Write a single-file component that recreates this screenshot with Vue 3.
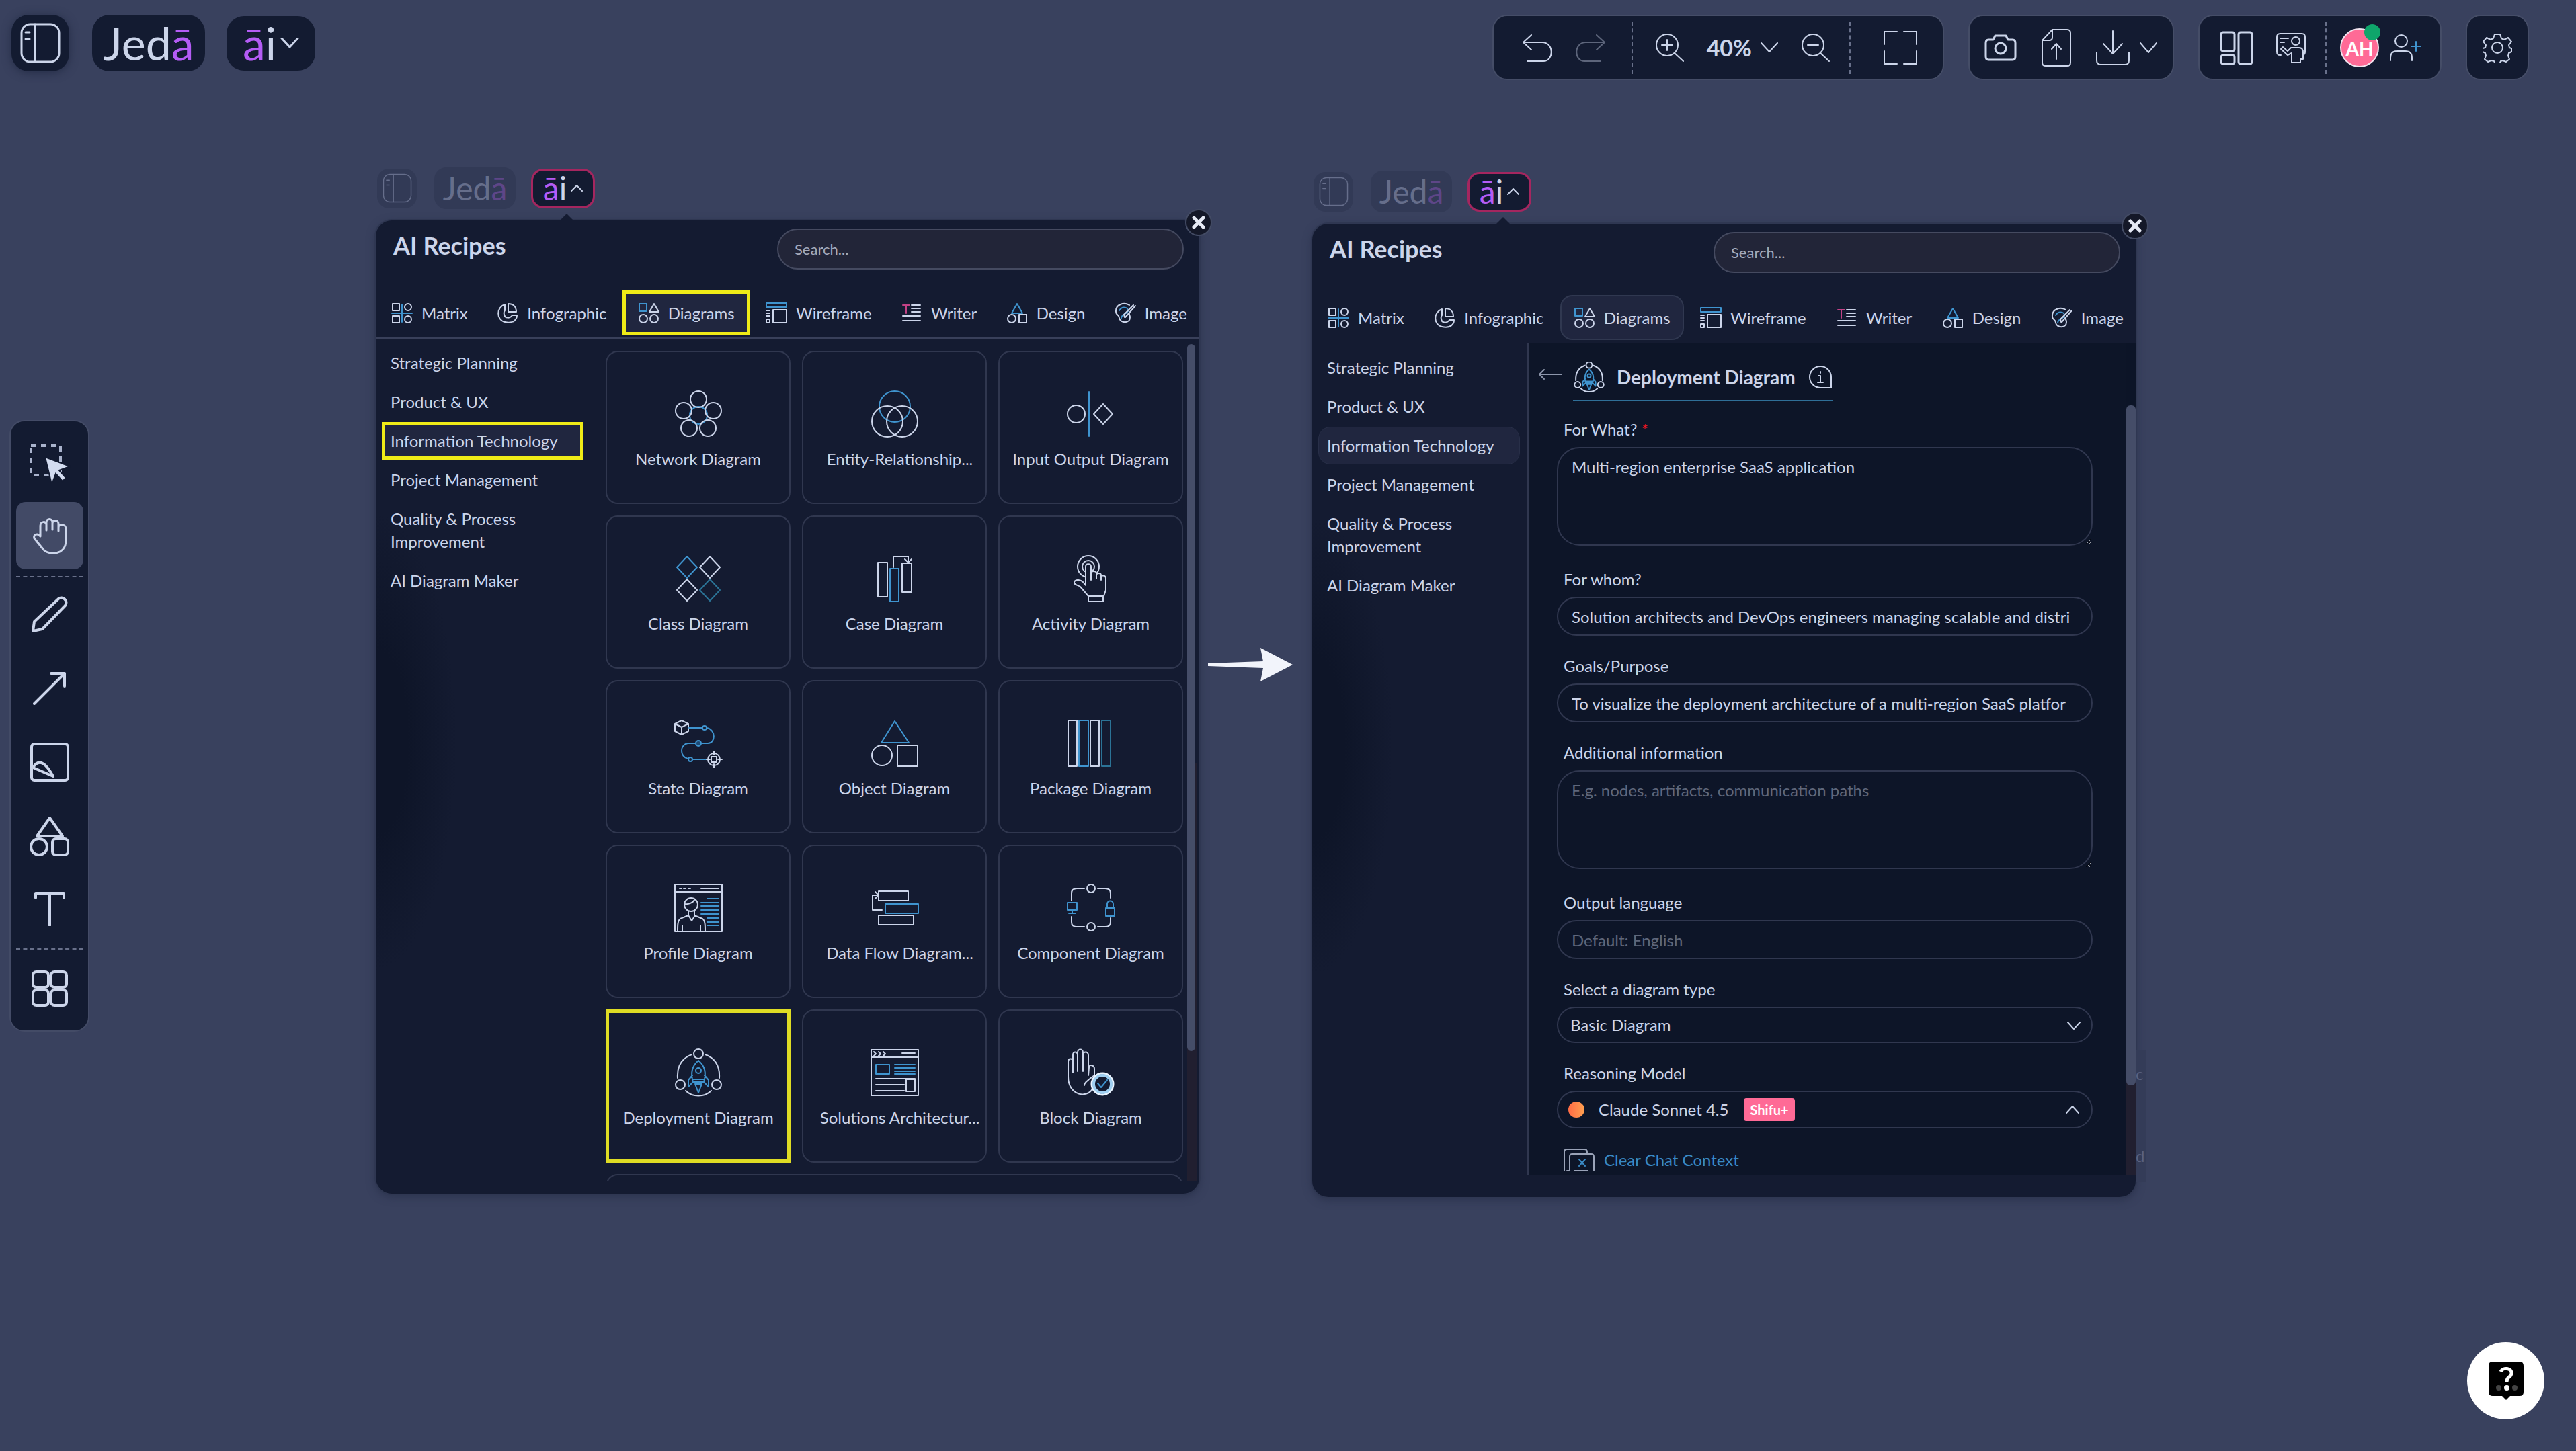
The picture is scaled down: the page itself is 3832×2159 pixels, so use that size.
<script setup>
import { ref } from 'vue'

const B = '#3f94cf'
const T = '#2b7396'

const glyphs = {
  network: `<circle cx="36" cy="38" r="13" stroke="${B}"/><circle cx="36" cy="14" r="12"/><circle cx="14" cy="31" r="12"/><circle cx="58" cy="31" r="12"/><circle cx="22" cy="57" r="12"/><circle cx="50" cy="57" r="12"/>`,
  entity: `<circle cx="36" cy="25" r="23" stroke="${B}"/><circle cx="25" cy="47" r="23"/><circle cx="47" cy="47" r="23"/>`,
  io: `<circle cx="14" cy="36" r="13"/><path d="M33 3v66" stroke="${B}"/><path d="M54 21l14 15-14 15-14-15z"/>`,
  class: `<path d="M19 3l15 16-15 16L4 19z" stroke="${B}"/><path d="M53 3l15 16-15 16-15-16z"/><path d="M19 37l15 16-15 16L4 53z"/><path d="M53 37l15 16-15 16-15-16z" stroke="${T}"/>`,
  case: `<path d="M11 12h14v51H11zM47 13h14v43H47z"/><path d="M29 21h13v49H29z" stroke="${B}"/><path d="M34 19V3h22v8M51 7l5 5 5-5"/>`,
  activity: `<circle cx="32" cy="18" r="9"/><circle cx="32" cy="18" r="16"/><path d="M28 46V18c0-5 8-5 8 0v20V28c0-4 8-4 8 0v8-5c0-4 7-4 7 0v7-4c0-4 7-3 7 1v18l-3 9H32L20 48c-5-3-10-3-9-7 2-5 10-3 13 0z" fill="#141b31"/><path d="M32 63h22v7H32z"/>`,
  state: `<path d="M11 2l10 5v11l-10 5-10-5V7zM11 23V12M1 7l10 5 10-5"/><path d="M22 13h19M48 13c14 2 14 23 2 23H40M32 36H20C8 38 8 56 20 59M27 60h21" stroke="${B}"/><circle cx="45" cy="13" r="3" stroke="${B}"/><circle cx="36" cy="36" r="4" stroke="${B}" fill="#1d4a75"/><circle cx="24" cy="60" r="3" stroke="${B}"/><circle cx="59" cy="60" r="9"/><path d="M55 56h8v8h-8zM59 48v5M59 67v5M48 60h5M65 60h6"/>`,
  object: `<path d="M36 3l21 32H16z" stroke="${B}"/><circle cx="17" cy="54" r="15"/><path d="M40 39h30v31H40z"/>`,
  package: `<path d="M2 2h13v68H2zM35 2h13v68H35z"/><path d="M18 2h14v68H18z" stroke="${B}"/><path d="M52 2h13v68H52z" stroke="${T}"/>`,
  profile: `<path d="M1 1h70v70H1zM1 12h70M8 7h3M14 7h3M21 7h3M40 7h26"/><circle cx="25" cy="31" r="10"/><path d="M16 30c5 1 12-2 14-6M21 41v6l-12 5c-4 3-4 10-4 18M30 41v6l12 5c4 3 4 10 4 18M21 47l5 8 5-8M12 62v9M39 62v9"/><path d="M49 22h17M40 28h26M40 33h26M40 39h26M40 45h26M49 51h17M49 57h17M49 62h17" stroke="${B}"/>`,
  flow: `<path d="M12 11h44v14H12zM12 47h52v14H12z"/><path d="M22 30h49v14H22z" stroke="${B}"/><path d="M17 39H3V17h8M7 12l5 5-5 5"/>`,
  component: `<circle cx="36" cy="7" r="6"/><circle cx="36" cy="64" r="6"/><path d="M7 25V14q0-7 8-7h11M46 7h11q8 0 8 7v7M7 49v8q0 7 8 7h11M46 64h11q8 0 8-7V51"/><path d="M1 28h14v11H1zM8 39v5M3 44h10M58 36h13v12H58zM60 36v-6c0-6 9-6 9 0v6" stroke="${B}"/>`,
  deploy: `<circle cx="36" cy="8" r="7"/><circle cx="9" cy="54" r="7"/><circle cx="63" cy="54" r="7"/><path d="M26 9C10 15 4 28 5 44M46 9c16 6 22 19 21 35M17 63c10 10 28 10 38 0"/><path d="M36 18c-11 9-11 22-8 32h16c3-10 3-23-8-32zM27 40l-6 7v10l7-7M45 40l6 7v10l-7-7M31 53l5 13 5-13M31 53h10M28 46h16" stroke="${B}"/><circle cx="36" cy="33" r="4" stroke="${B}"/>`,
  solution: `<path d="M1 2h70v68H1zM1 13h70M5 5l3 3-3 3M12 5l3 3-3 3M19 5l3 3-3 3M47 7h19"/><path d="M8 24h20v14H8zM36 24h30M36 29h30M36 34h30M36 38h30" stroke="${B}"/><path d="M8 45h58M8 54h42M8 63h42M53 46h13v18H53z"/>`,
  block: `<path d="M2 42V20c0-6 7-6 7 0v16V10c0-6 7-6 7 0v24V6c0-6 8-6 8 0v28V10c0-6 8-6 8 0v30l1-12c0-5 8-3 8 2v10l-8 6c-4 4-7 5-7 9M2 42c0 30 30 32 36 18"/><circle cx="53" cy="53" r="16" stroke="#eaf4ff" stroke-width="3" fill="#141b31"/><circle cx="53" cy="53" r="13" stroke="#9fd0f2" stroke-width="4"/><path d="M46 52l5 6 9-11" stroke="${B}"/>`,
  tMatrix: `<path d="M2 2h10v10H2zM2 20h10v10H2z"/><circle cx="25" cy="7" r="5"/><circle cx="25" cy="25" r="5"/><path d="M1 16h30M16 3v26" stroke="${B}"/>`,
  tInfo: `<path d="M17 2v12h12C29 6 24 2 17 2z"/><path d="M12 3C-1 7-1 26 12 29s18-4 18-10h-7c-3 5-11 5-12-1-1-4 1-6 1-6z"/>`,
  tDiagrams: `<path d="M2 2h11v11H2z" stroke="${B}"/><path d="M24 2l7 12H17z"/><circle cx="8" cy="24" r="6"/><circle cx="24" cy="24" r="6"/>`,
  tWire: `<path d="M1 1h30v6H1z" stroke="${B}"/><path d="M11 11h20v19H11zM1 12h5M1 16h5M1 20h5M1 25h5v5H1z"/>`,
  tWriter: `<path d="M3 4h10M8 4v12" stroke="#c24286"/><path d="M16 4h13M16 9h13M16 14h13M3 20h26M3 27h26"/>`,
  tDesign: `<path d="M16 2l8 14H8z" stroke="${B}"/><circle cx="8" cy="24" r="6"/><path d="M19 18h11v12H19z"/>`,
  tImage: `<path d="M22 4C14-1 1 3 2 14c0 5 5 4 5 9 1 8 16 9 16-1 0-3-2-4-1-7"/><path d="M7 12c5-8 14-4 13 1-3 5-9 4-10 10" stroke="${B}"/><path d="M31 5l-15 17M28 4L14 18l1 4"/>`,
  sidebar: `<rect x="2" y="2" width="56" height="56" rx="13"/><path d="M22 2v56M8 14h6M8 24h6"/>`,
}

const tabs = [
  ['Matrix', 'tMatrix'], ['Infographic', 'tInfo'], ['Diagrams', 'tDiagrams'], ['Wireframe', 'tWire'],
  ['Writer', 'tWriter'], ['Design', 'tDesign'], ['Image', 'tImage'],
]
const categories = ['Strategic Planning', 'Product & UX', 'Information Technology', 'Project Management', 'Quality & Process Improvement', 'AI Diagram Maker']
const recipes = [
  ['Network Diagram', 'network'], ['Entity-Relationship...', 'entity'], ['Input Output Diagram', 'io'],
  ['Class Diagram', 'class'], ['Case Diagram', 'case'], ['Activity Diagram', 'activity'],
  ['State Diagram', 'state'], ['Object Diagram', 'object'], ['Package Diagram', 'package'],
  ['Profile Diagram', 'profile'], ['Data Flow Diagram...', 'flow'], ['Component Diagram', 'component'],
  ['Deployment Diagram', 'deploy'], ['Solutions Architectur...', 'solution'], ['Block Diagram', 'block'],
]
const windows = [{ id: 'list' }, { id: 'form' }]

const forWhat = ref('Multi-region enterprise SaaS application')
const forWhom = ref('Solution architects and DevOps engineers managing scalable and distri')
const goals = ref('To visualize the deployment architecture of a multi-region SaaS platfor')
const extra = ref('')
const language = ref('')
const diagramType = ref('Basic Diagram')
</script>

<template>
  <div class="page">
    <main class="board">
      <template v-for="w in windows" :key="w.id">
        <div v-if="w.id === 'form'" class="step">
          <svg width="130" height="52" viewBox="0 0 130 52" fill="#f2f4fb"><path d="M2 24l82-3L80 1l48 25-48 25 4-20-82-3z" /></svg>
        </div>
        <section class="unit" :class="w.id">
          <div class="minibar">
            <button class="mini faded side" aria-label="Sidebar"><svg width="44" height="44" viewBox="0 0 60 60" class="ic" v-html="glyphs.sidebar"></svg></button>
            <button class="mini faded jeda"><span>Jed</span><b>ā</b></button>
            <button class="mini open"><b>ā</b><span>i</span><svg width="18" height="10" viewBox="0 0 18 10" class="ic"><path d="M1 9l8-8 8 8" /></svg></button>
          </div>
          <div class="window">
            <button class="close" aria-label="Close"><svg width="20" height="20" viewBox="0 0 20 20"><path d="M3 3l14 14M17 3L3 17" stroke="#e6eaf5" stroke-width="5" stroke-linecap="round" /></svg></button>
            <header class="head">
              <h2>AI Recipes</h2>
              <input class="search" type="search" placeholder="Search..." aria-label="Search recipes" />
            </header>
            <nav class="tabs">
              <button v-for="t in tabs" :key="t[0]" class="tab" :class="{ on: t[0] === 'Diagrams' }">
                <svg width="32" height="32" viewBox="0 0 32 32" class="ic" v-html="glyphs[t[1]]"></svg>{{ t[0] }}
              </button>
            </nav>
            <div class="body">
              <nav class="cats">
                <button v-for="c in categories" :key="c" :class="{ on: c === 'Information Technology' }">{{ c }}</button>
              </nav>

              <template v-if="w.id === 'list'">
                <div class="cards">
                  <button v-for="r in recipes" :key="r[0]" class="card" :class="{ picked: r[1] === 'deploy', cut: r[0].endsWith('...') }">
                    <svg width="72" height="72" viewBox="0 0 72 72" class="ic" v-html="glyphs[r[1]]"></svg>
                    <span>{{ r[0] }}</span>
                  </button>
                  <div class="card next"></div>
                </div>
                <div class="track"><div class="thumb"></div></div>
              </template>

              <template v-else>
                <form class="form" @submit.prevent>
                  <div class="title">
                    <button class="back" aria-label="Back"><svg width="36" height="18" viewBox="0 0 36 18" class="ic"><path d="M9 2L2 9l7 7M2 9h33" /></svg></button>
                    <h3>
                      <svg width="46" height="46" viewBox="0 0 72 72" class="ic mid" v-html="glyphs.deploy"></svg>
                      <span>Deployment Diagram</span>
                      <svg width="34" height="34" viewBox="0 0 34 34" class="ic"><path d="M17 1a16 16 0 1 0 0 32h16V17A16 16 0 0 0 17 1zM17 9v2M14 15h3v10M13 25h8" /></svg>
                    </h3>
                  </div>
                  <div class="field big">
                    <label for="what">For What? <i>*</i></label>
                    <textarea id="what" v-model="forWhat"></textarea>
                  </div>
                  <div class="field">
                    <label for="whom">For whom?</label>
                    <input id="whom" v-model="forWhom" type="text" />
                  </div>
                  <div class="field">
                    <label for="goals">Goals/Purpose</label>
                    <input id="goals" v-model="goals" type="text" />
                  </div>
                  <div class="field big">
                    <label for="extra">Additional information</label>
                    <textarea id="extra" v-model="extra" placeholder="E.g. nodes, artifacts, communication paths"></textarea>
                  </div>
                  <div class="field">
                    <label for="lang">Output language</label>
                    <input id="lang" v-model="language" type="text" placeholder="Default: English" />
                  </div>
                  <div class="field">
                    <label for="type">Select a diagram type</label>
                    <div class="pick">
                      <select id="type" v-model="diagramType"><option>Basic Diagram</option><option>Detailed Diagram</option></select>
                      <svg width="20" height="12" viewBox="0 0 20 12" class="ic"><path d="M1 1l9 10 9-10" /></svg>
                    </div>
                  </div>
                  <div class="field">
                    <label for="model">Reasoning Model</label>
                    <button id="model" type="button" class="model">
                      <span class="dot"></span><span>Claude Sonnet 4.5</span><em>Shifu+</em>
                      <svg width="20" height="12" viewBox="0 0 20 12" class="ic"><path d="M1 11l9-10 9 10" /></svg>
                    </button>
                  </div>
                  <a href="#" class="clear">
                    <svg width="46" height="34" viewBox="0 0 46 34" class="ic"><path d="M8 33H5l-4 3V5q0-4 4-4h26q4 0 4 4v3M9 36V12q0-4 4-4h28q4 0 4 4v24M16 33h20" /><path d="M23 16l9 10M32 16l-9 10" stroke="#3989c4" /></svg>
                    Clear Chat Context
                  </a>
                </form>
                <div class="track"><div class="thumb"></div></div>
              </template>
            </div>
            <div v-if="w.id === 'form'" class="behind" aria-hidden="true"><span>c</span><span>d</span></div>
          </div>
        </section>
      </template>
    </main>

    <header class="top">
      <div class="brand">
        <button class="chip menu" aria-label="Sidebar"><svg width="60" height="60" viewBox="0 0 60 60" class="ic" v-html="glyphs.sidebar"></svg></button>
        <button class="chip logo"><span>Jed</span><b>ā</b></button>
        <button class="chip ai"><b>ā</b><span>i</span><svg width="28" height="16" viewBox="0 0 28 16" class="ic"><path d="M2 1l12 13L26 1" /></svg></button>
      </div>
      <div class="bars">
        <div class="bar view">
          <button aria-label="Undo"><svg width="46" height="42" viewBox="0 0 46 42" class="ic"><path d="M14 2L2 13l12 11M2 13h28c18 0 18 28 2 28H8" /></svg></button>
          <button aria-label="Redo" class="off"><svg width="46" height="42" viewBox="0 0 46 42" class="ic"><path d="M32 2l12 11-12 11M44 13H16c-18 0-18 28-2 28h24" /></svg></button>
          <hr class="near" />
          <button aria-label="Zoom in"><svg width="44" height="44" viewBox="0 0 44 44" class="ic"><circle cx="18" cy="18" r="16" /><path d="M29 30l13 12M18 10v16M10 18h16" /></svg></button>
          <button class="zoom">40%<svg width="28" height="16" viewBox="0 0 28 16" class="ic"><path d="M2 1l12 13L26 1" /></svg></button>
          <button aria-label="Zoom out"><svg width="44" height="44" viewBox="0 0 44 44" class="ic"><circle cx="18" cy="18" r="16" /><path d="M29 30l13 12M10 18h16" /></svg></button>
          <hr class="wide" />
          <button aria-label="Fit"><svg width="50" height="50" viewBox="0 0 50 50" class="ic"><path d="M1 20V1h19M30 1h19v19M1 30v19h19M30 49h19V30" /></svg></button>
        </div>
        <div class="bar share">
          <button aria-label="Capture"><svg width="48" height="42" viewBox="0 0 48 42" class="ic mid"><path d="M6 9h7l3-6h16l3 6h7q4 0 4 5v20q0 5-4 5H6q-4 0-4-5V14q0-5 4-5z" /><circle cx="24" cy="22" r="8" /></svg></button>
          <button aria-label="Upload"><svg width="44" height="58" viewBox="0 0 44 58" class="ic"><path d="M16 2h22q5 0 5 5v44q0 5-5 5H6q-5 0-5-5V18L16 2v12q0 4-5 4H2M22 46V24M15 31l7-8 7 8" /></svg></button>
          <button aria-label="Download" class="dl"><svg width="50" height="52" viewBox="0 0 50 52" class="ic"><path d="M25 1v33M11 20l14 15 14-15M1 33v12q0 6 6 6h36q6 0 6-6V33" /></svg><svg width="28" height="16" viewBox="0 0 28 16" class="ic"><path d="M2 1l12 14L26 1" /></svg></button>
        </div>
        <div class="bar people">
          <button aria-label="Layout"><svg width="50" height="50" viewBox="0 0 50 50" class="ic mid"><rect x="2" y="2" width="20" height="28" rx="3" /><rect x="2" y="36" width="20" height="13" rx="3" /><rect x="28" y="2" width="20" height="47" rx="3" /></svg></button>
          <button class="present" aria-label="Present"><svg width="46" height="46" viewBox="0 0 46 46" class="ic"><path d="M7 34H6q-5 0-5-5V7q0-5 5-5h32q5 0 5 5v22q0 4-3 5M6 9h12M6 15h6" /><circle cx="29" cy="13" r="6" /><path d="M22 23h12q6 0 6 7v10h-4v5H23V31l-6 3-10-9 3-3 7 6z" /></svg></button>
          <hr />
          <div class="avatar">AH<i></i></div>
          <button aria-label="Invite"><svg width="48" height="42" viewBox="0 0 48 42" class="ic"><circle cx="18" cy="11" r="9" /><path d="M2 40v-4q0-10 10-10h12q10 0 10 10v4" /><path d="M40 12v14M33 19h14" stroke="#3f94cf" /></svg></button>
        </div>
        <div class="bar gear">
          <button aria-label="Settings"><svg width="44" height="44" viewBox="0 0 44 44" class="ic"><circle cx="22" cy="22" r="8" /><path d="M18 2h8l2 6 4 2 6-3 5 6-4 5 1 4 3 1v5l-4 2-1 4 2 5-5 4-5-2-3 1-2 4h-6l-2-4-4-1-5 2-5-4 2-5-1-4-4-2v-5l4-1 1-4-4-5 5-6 6 3 4-2z" /></svg></button>
        </div>
      </div>
    </header>

    <aside class="dock">
      <button class="tall" aria-label="Select"><svg width="62" height="58" viewBox="0 0 62 58"><path d="M3 3h44v44H3z" fill="none" stroke="#a9b3cc" stroke-width="4" stroke-dasharray="8 7" /><path d="M24 20l37 14-16 6 10 11-5 5-10-11-6 16z" fill="#d3dcf0" stroke="#131b31" stroke-width="2" /></svg></button>
      <button aria-label="Pan" class="on"><svg width="52" height="54" viewBox="0 0 52 54" class="ic mid"><path d="M12 28V12c0-7 9-7 9-1v8V7c0-6 9-6 9 0v11-9c0-6 9-6 9 0v11-5c0-7 11-5 11 1v18c0 24-28 22-34 13L3 31c-2-6 5-8 9-3z" /></svg></button>
      <hr />
      <button aria-label="Pen"><svg width="54" height="54" viewBox="0 0 54 54" class="ic bold"><path d="M4 38L40 4c6-5 15 3 10 10L16 49 2 52z" /></svg></button>
      <button aria-label="Line"><svg width="50" height="50" viewBox="0 0 50 50" class="ic bold"><path d="M2 48L47 3M27 3h20v19" /></svg></button>
      <button aria-label="Note"><svg width="58" height="58" viewBox="0 0 58 58" class="ic bold"><rect x="2" y="2" width="54" height="54" rx="4" /><path d="M4 37c9-14 19-7 30 13z" /></svg></button>
      <button aria-label="Shapes"><svg width="58" height="60" viewBox="0 0 58 60" class="ic bold"><path d="M29 3l19 27H10z" /><circle cx="13" cy="46" r="12" /><rect x="33" y="34" width="23" height="24" rx="5" /></svg></button>
      <button class="short" aria-label="Text"><svg width="48" height="52" viewBox="0 0 48 52" class="ic bold"><path d="M3 10V3h42v7M24 3v48" /></svg></button>
      <hr class="last" />
      <button class="tall" aria-label="Apps"><svg width="54" height="54" viewBox="0 0 54 54" class="ic bold"><rect x="2" y="2" width="23" height="23" rx="5" /><rect x="29" y="2" width="23" height="23" rx="5" /><rect x="2" y="29" width="23" height="23" rx="5" /><rect x="29" y="29" width="23" height="23" rx="5" /></svg></button>
    </aside>

    <button class="help" aria-label="Help"><svg width="52" height="58" viewBox="0 0 52 58"><path d="M6 0h40q6 0 6 6v39q0 6-6 6H32l-6 6-6-6H6q-6 0-6-6V6q0-6 6-6z" fill="#000" /><path d="M18 15c3-7 17-6 16 3-1 6-7 4-7 12" fill="none" stroke="#fff" stroke-width="5" /><circle cx="27" cy="39" r="4" fill="#fff" /><circle cx="15" cy="39" r="4" fill="#444" /><circle cx="39" cy="39" r="4" fill="#444" /></svg></button>
  </div>
</template>

<style>
body { margin: 0; background: #39415e; }
</style>

<style scoped>
* { box-sizing: border-box; }
.page { display: grid; grid-template-columns: minmax(0, 1fr); min-height: 100vh; background: #39415e; color: #ccd5ea; font: 24px/34px Lato, "Open Sans", sans-serif; }
.page > * { grid-area: 1 / 1; }
button, input, textarea, select { font: inherit; color: inherit; margin: 0; }
button { display: flex; align-items: center; justify-content: center; border: 0; padding: 0; background: none; }
h2, h3 { margin: 0; }
hr { margin: 0; border: 0; }
.ic { display: block; flex: none; fill: none; stroke: currentColor; stroke-width: 2; stroke-linejoin: round; stroke-linecap: round; }
.ic.mid { stroke-width: 3; }
.ic.bold { stroke-width: 4; }

.top { display: flex; justify-content: space-between; align-items: flex-start; align-self: start; padding: 22px 70px 0 17px; }
.brand { display: flex; align-items: center; }
.chip { height: 84px; border-radius: 26px; background: #131b31; font-size: 68px; line-height: 84px; }
.chip b, .mini b { font-weight: 400; color: #b45cf5; }
.menu { width: 86px; margin-right: 34px; box-shadow: 0 2px 14px #252d47; }
.menu .ic, .ai .ic { stroke-width: 3; }
.logo { width: 168px; margin-right: 32px; }
.ai { width: 132px; height: 81px; }
.ai .ic { margin-left: 6px; }
.bars { display: flex; gap: 36px; }
.bar { display: flex; align-items: center; justify-content: space-between; height: 97px; border: 2px solid #454d67; border-radius: 22px; background: #131b31; }
.bar hr { height: 78px; border-left: 2px dashed #68708a; }
.bar .near { margin: 0 0 0 6px; }
.bar .wide { margin: 0 16px 0 -4px; }
.view { width: 672px; padding: 0 38px 0 42px; }
.zoom { gap: 12px; font: 700 34px/42px Lato, sans-serif; }
.off { opacity: .4; }
.share { width: 306px; padding: 0 22px; }
.dl { gap: 14px; }
.people { width: 362px; justify-content: flex-start; padding: 0 24px 0 30px; }
.present { margin-left: 34px; }
.people hr { margin: 0 20px 0 27px; }
.avatar + button { margin-left: 15px; }
.gear { width: 94px; justify-content: center; }
.avatar { position: relative; width: 58px; height: 58px; border: 2px solid #f1e3ee; border-radius: 50%; background: #ff6a96; color: #fff; font: 700 28px/56px Lato, sans-serif; text-align: center; }
.avatar i { position: absolute; right: -4px; top: -8px; width: 24px; height: 24px; border-radius: 50%; background: #0fa56b; }

.dock { display: flex; flex-direction: column; align-items: center; align-self: center; justify-self: start; width: 119px; margin-left: 14px; padding: 4px 0; border: 2px solid #434b66; border-radius: 22px; background: #131b31; color: #ccd5ea; }
.dock button { width: 100px; height: 110px; border-radius: 14px; }
.dock .tall { height: 116px; }
.dock .short { height: 106px; }
.dock .on { height: 100px; background: #424a66; }
.dock hr { width: 100px; height: 12px; border-bottom: 2px dashed #68708a; }
.dock .last { height: 8px; }

.board { display: flex; align-items: flex-start; padding: 249px 653px 0 557px; }
.unit { flex: 1; min-width: 0; }
.unit.form { margin-top: 5px; }
.step { flex: none; width: 164px; padding: 714px 0 0 9px; }
.minibar { display: flex; align-items: center; height: 62px; margin: 0 0 15px 4px; }
.mini { height: 59px; border-radius: 18px; background: #131b31; font-size: 48px; line-height: 58px; }
.side { width: 59px; margin-right: 26px; }
.jeda { width: 121px; height: 62px; margin-right: 23px; }
.mini.faded { background: #323a56; color: #666e8b; }
.mini.faded b { color: #5e4688; }
.open { width: 95px; border: 3px solid #a5265f; }
.open .ic { margin-left: 6px; }

.window { position: relative; border: 2px solid #2f3752; border-radius: 26px; background: #141b31; box-shadow: 0 4px 12px #2e3651; padding-bottom: 18px; }
.window::before { content: ""; position: absolute; left: 274px; top: -10px; border: 10px solid transparent; border-top: 0; border-bottom-color: #141b31; }
.form .window { padding-bottom: 32px; }
.close { position: absolute; right: -19px; top: -17px; width: 40px; height: 40px; border: 2px solid #434b64; border-radius: 50%; background: #141828; }
.head { display: flex; justify-content: space-between; height: 104px; padding: 12px 23px 0 26px; }
.form .head { height: 106px; }
.head h2 { font: 700 36px/50px Lato, sans-serif; }
.search { width: 605px; height: 61px; padding: 0 24px; border: 2px solid #454a60; border-radius: 32px; background: #222538; font-size: 22px; appearance: none; outline: 0; }
.search::placeholder { color: #a5abbc; opacity: 1; }
.tabs { display: flex; justify-content: space-between; height: 72px; padding: 0 0 3px 3px; border-bottom: 2px solid transparent; }
.list .tabs { border-color: #39405a; }
.tab { gap: 13px; padding: 0 18px; border: 2px solid transparent; border-radius: 18px; white-space: nowrap; }
.tab:last-child { padding-right: 16px; }
.tab.on { border-color: #303850; background: #20263f; }
.list .tab.on { border: 5px solid #efeb17; border-radius: 0; padding: 0 18px; }
.body { display: flex; height: 1254px; }
.form .body { height: 1238px; }
.cats { flex: none; width: 320px; padding: 8px 11px 0 9px; display: flex; flex-direction: column; gap: 2px; background: radial-gradient(120px 340px at 0 600px, #0e1528 40%, #141b31); }
.cats button { justify-content: flex-start; padding: 10px 12px; border: 1px solid transparent; border-radius: 18px; text-align: left; }
.cats .on { background: #20263f; border-color: #282f48; }
.list .cats .on { outline: 5px solid #efeb17; outline-offset: -5px; border-radius: 0; }
.cards { flex: 1; display: grid; grid-template-columns: repeat(3, minmax(0, 1fr)); grid-auto-rows: 228px; gap: 17px; padding: 18px 6px 0 22px; overflow: hidden; }
.card { flex-direction: column; justify-content: flex-start; padding-top: 56px; border: 2px solid #30374f; border-radius: 18px; white-space: nowrap; }
.card span { margin-top: 14px; }
.card.cut span { padding-left: 16px; }
.card.picked { border: 5px solid #dfdc24; border-radius: 0; padding-top: 53px; }
.card.next { grid-column: 1 / -1; }
.track { flex: none; width: 14px; margin: 8px 4px 0 0; background: linear-gradient(#141b31 50%, #211f30 50%); }
.thumb { width: 12px; height: 1052px; border-radius: 6px; background: #454d68; }
.form .track { margin: 0; background: linear-gradient(#0c1427 50%, #211f30 50%); padding-top: 92px; }
.form .thumb { width: 14px; height: 1012px; }

form.form { flex: 1; min-width: 0; padding: 0 50px 0 14px; border-left: 2px solid #30374f; background: #0d1528; overflow: hidden; }
.title { display: flex; align-items: center; height: 92px; gap: 16px; }
.title h3 { display: flex; align-items: center; height: 70px; padding: 0 1px; margin-top: 10px; border-bottom: 2px solid #2f6f98; font: 700 28px/36px Lato, sans-serif; }
.title h3 span { margin: 0 20px 0 18px; }
.back { color: #8d96ab; }
.field { display: flex; flex-direction: column; gap: 11px; margin: 0 0 30px 28px; }
.field.big { margin-bottom: 35px; }
.title + .field { margin-top: 21px; }
.field label { height: 30px; padding-left: 10px; line-height: 30px; }
.field i { color: #f01420; }
.field input, .field textarea, .field select, .model { display: block; width: 100%; height: 58px; padding: 0 20px; border: 2px solid #30374f; border-radius: 30px; background: transparent; outline: 0; }
.field textarea { height: 147px; padding: 11px 20px; resize: vertical; color-scheme: dark; border-radius: 34px; }
.field ::placeholder { color: #5f677b; opacity: 1; }
.pick { position: relative; }
.pick select { height: 54px; appearance: none; padding: 0 18px; }
.pick .ic { position: absolute; right: 18px; top: 22px; }
.field .model { display: flex; justify-content: flex-start; padding: 0 18px 0 15px; height: 56px; }
.dot { width: 24px; height: 24px; margin-right: 21px; border-radius: 50%; background: linear-gradient(90deg, #ff6b45, #ffa050); }
.model em { margin-left: 23px; padding: 0 9px; border-radius: 4px; background: #ff6a96; color: #fff; font: 700 20px/34px Lato, sans-serif; }
.model .ic { margin-left: auto; }
.clear { display: flex; align-items: center; gap: 14px; margin: 0 0 0 38px; color: #3989c4; text-decoration: none; }
.clear .ic { color: #9aa3b8; }
.behind { position: absolute; left: 100%; bottom: 22px; width: 16px; height: 196px; padding-top: 18px; background: #343c58; color: #5a6280; overflow: hidden; }
.behind span { display: block; height: 122px; }

.help { align-self: end; justify-self: end; width: 115px; height: 115px; margin: 0 47px 47px 0; border-radius: 50%; background: #fff; }
</style>
